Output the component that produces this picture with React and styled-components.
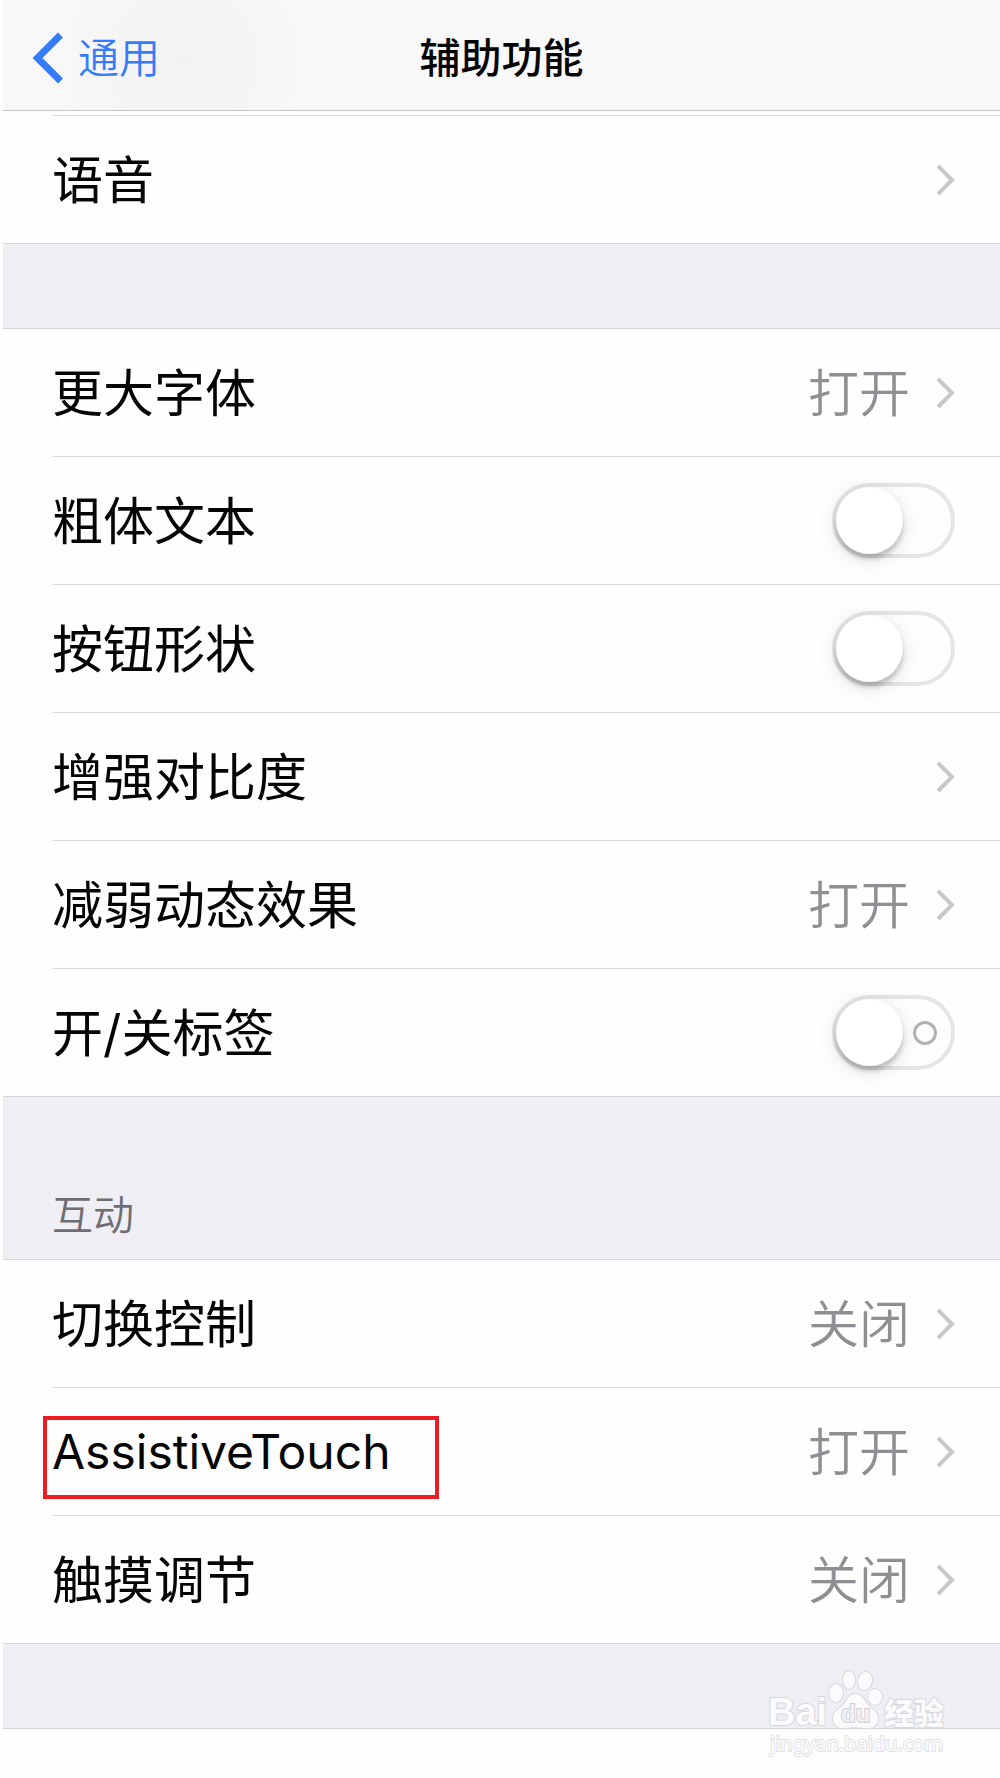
import React from 'react'
import styled, { createGlobalStyle } from 'styled-components'

const App = () => {
  return (
    <>
      <GlobalStyle />
      <Page>
        <NavBar>
          <BackLink href="#general">
            <BackArrow viewBox="0 0 32 52" aria-hidden="true">
              <path d="M29.500 3L6.500 26L29.500 49" />
            </BackArrow>
            通用
          </BackLink>
          <Title>辅助功能</Title>
        </NavBar>
        <main>
          <Group $first>
            <ScrolledItem />
            <LinkRow label="语音" />
          </Group>
          <Spacer />
          <Group>
            <LinkRow label="更大字体" value="打开" />
            <SwitchRow id="bold-text" label="粗体文本" />
            <SwitchRow id="button-shapes" label="按钮形状" />
            <LinkRow label="增强对比度" />
            <LinkRow label="减弱动态效果" value="打开" />
            <SwitchRow id="switch-labels" label="开/关标签" marked />
          </Group>
          <SectionTitle>互动</SectionTitle>
          <Group>
            <LinkRow label="切换控制" value="关闭" />
            <LinkRow label="AssistiveTouch" value="打开" latin highlighted />
            <LinkRow label="触摸调节" value="关闭" />
          </Group>
          <Spacer $last />
        </main>
        <Watermark />
      </Page>
    </>
  )
}

const LinkRow = ({ label, value, latin, highlighted }) => (
  <Item>
    <RowLink href="#detail">
      <Label $latin={latin}>{label}</Label>
      {value && <Value>{value}</Value>}
      <Chevron viewBox="0 0 20 32" aria-hidden="true">
        <path d="M2 2L16 16L2 30" />
      </Chevron>
    </RowLink>
    {highlighted && <Highlight />}
  </Item>
)

const SwitchRow = ({ id, label, marked }) => (
  <Item>
    <RowLabel htmlFor={id}>
      <Label>{label}</Label>
      <Switch id={id} type="checkbox" $marked={marked} />
    </RowLabel>
  </Item>
)

const Watermark = () => (
  <Mark viewBox="0 0 190 100" aria-hidden="true">
    <text x="6" y="65" className="latin">Bai</text>
    <ellipse cx="74" cy="33" rx="7" ry="9" />
    <ellipse cx="87" cy="20" rx="6" ry="9" />
    <ellipse cx="103" cy="21" rx="7" ry="9" transform="rotate(12 103 21)" />
    <ellipse cx="113" cy="37" rx="7" ry="8" />
    <path d="M93.500 34C101 34 103 42 108 47C113 51 117 54 116 60C115 67 109 69 103 68C97 67 90 67 84 68C77 69 72 66 71 60C70 53 75 50 80 46C85 41 86 34 93.500 34Z" />
    <text x="79" y="62" className="du">du</text>
    <text x="122" y="64" className="cjk">经验</text>
    <text x="8" y="91" className="site">jingyan.baidu.com</text>
  </Mark>
)

export default App

const GlobalStyle = createGlobalStyle`
  *, *::before, *::after {
    box-sizing:border-box;
  }
  body {
    margin:0;
    background:#fefefe;
    color:#050505;
    font-family:Inter, 'Noto Sans CJK SC', sans-serif;
  }
  a {
    color:inherit;
    text-decoration:none;
  }
`
const Page = styled.div`
    position:relative;
    padding:0 0 49px 3px;
`
const NavBar = styled.header`
    display:grid;
    grid-template-columns:1fr auto 1fr;
    align-items:center;
    height:111px;
    padding:6px 28px 0;
    border-bottom:1px solid #c6c6c8;
    background:radial-gradient(circle at 180px 60px, #f2f2f3 0, #f4f4f4 50px, #f8f8f8 130px);
`
const BackLink = styled.a`
    display:flex;
    align-items:center;
    gap:15px;
    color:#347cf9;
    font-size:41px;
    font-weight:350;
    line-height:60px;
`
const BackArrow = styled.svg`
    width:32px;
    height:52px;
    fill:none;
    stroke:currentColor;
    stroke-width:7;
`
const Title = styled.h1`
    margin:0;
    font-size:41px;
    font-weight:500;
    line-height:60px;
`
const Group = styled.ul`
    margin:0;
    padding:0;
    list-style:none;
    border-top:${({ $first }) => ($first ? 'none' : '1px solid #d5d5d9')};
    border-bottom:1px solid #d5d5d9;
`
const Item = styled.li`
    position:relative;
    margin-left:49px;
    border-bottom:1px solid #dcdcde;
    &:last-child {
        border-bottom:none;
    }
`
/* bottom edge of the row that is scrolled under the bar */
const ScrolledItem = styled(Item)`
    height:5px;
`
const RowLink = styled.a`
    display:flex;
    align-items:center;
    min-height:127px;
    padding-right:44px;
`
const RowLabel = styled.label`
    display:flex;
    align-items:center;
    min-height:127px;
    padding-right:45px;
`
const Label = styled.span`
    flex:1;
    padding-top:${({ $latin }) => ($latin ? '0' : '3px')};
    font-size:${({ $latin }) => ($latin ? '48px' : '51px')};
    line-height:72px;
`
const Value = styled.span`
    margin-right:26px;
    padding-top:3px;
    color:#8e8e93;
    font-size:51px;
    font-weight:350;
    line-height:72px;
`
const Chevron = styled.svg`
    width:20px;
    height:32px;
    fill:none;
    stroke:#c7c7cc;
    stroke-width:4;
`
const Switch = styled.input`
    appearance:none;
    display:flex;
    align-items:center;
    justify-content:space-between;
    width:123px;
    height:75px;
    margin:0;
    padding-right:14px;
    border:4px solid #e5e5e5;
    border-radius:38px;
    &::before {
        content:'';
        width:67px;
        height:67px;
        border-radius:50%;
        background:#fff;
        box-shadow:0 5px 5px rgba(0,0,0,0.2), 0 4px 22px rgba(0,0,0,0.12);
    }
    &::after {
        content:'';
        display:${({ $marked }) => ($marked ? 'block' : 'none')};
        width:24px;
        height:24px;
        border:3px solid #b2b2b2;
        border-radius:50%;
    }
`
const Highlight = styled.div`
    position:absolute;
    top:28px;
    left:-9px;
    width:396px;
    height:83px;
    border:4px solid #ed1c24;
    pointer-events:none;
`
const Spacer = styled.div`
    height:${({ $last }) => ($last ? '85px' : '84px')};
    background:#efeef4;
    border-bottom:${({ $last }) => ($last ? '1px solid #d5d5d9' : 'none')};
`
const SectionTitle = styled.h2`
    display:flex;
    align-items:flex-end;
    height:162px;
    margin:0;
    padding:0 0 14px 49px;
    background:#efeef4;
    color:#6d6d72;
    font-size:41px;
    font-weight:350;
    line-height:60px;
`
const Mark = styled.svg`
    position:absolute;
    right:48px;
    bottom:18px;
    width:190px;
    height:100px;
    fill:#fbfbfd;
    stroke:#d8d8dc;
    stroke-width:2;
    paint-order:stroke;
    pointer-events:none;
    .latin {
        font:700 38px 'Liberation Sans', sans-serif;
    }
    .du {
        font:700 24px 'Liberation Sans', sans-serif;
        fill:#f1f1f5;
        stroke:#d0d0d6;
    }
    .cjk {
        font:900 30px 'Noto Sans CJK SC', sans-serif;
    }
    .site {
        font:400 20px 'Noto Sans', sans-serif;
        stroke:#e2e2e5;
    }
`
